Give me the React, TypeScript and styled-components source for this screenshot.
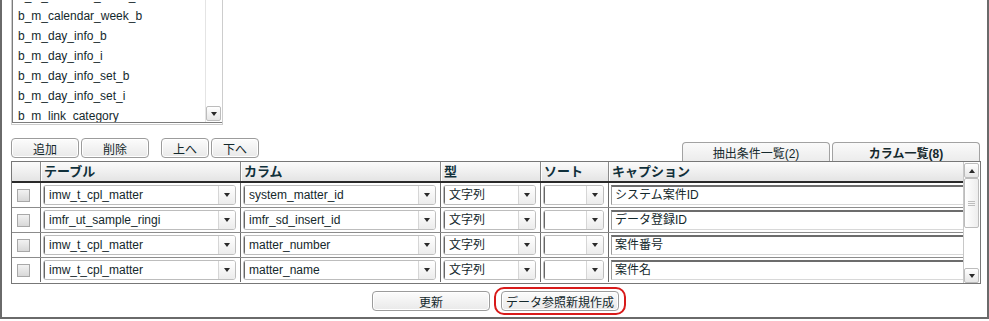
import React from 'react';
import styled, { createGlobalStyle } from 'styled-components';

const GlobalStyle = createGlobalStyle`
  html, body { margin: 0; padding: 0; background: #fff; }
  body {
    font-family: "Liberation Sans", "Noto Sans CJK JP", sans-serif;
    font-size: 12px;
    color: #14282c;
  }
  * { box-sizing: border-box; }
`;

const listItems = [
  'b_m_calendar_week_a',
  'b_m_calendar_week_b',
  'b_m_day_info_b',
  'b_m_day_info_i',
  'b_m_day_info_set_b',
  'b_m_day_info_set_i',
  'b_m_link_category',
];

const rows = [
  { table: 'imw_t_cpl_matter', column: 'system_matter_id', type: '文字列', caption: 'システム案件ID' },
  { table: 'imfr_ut_sample_ringi', column: 'imfr_sd_insert_id', type: '文字列', caption: 'データ登録ID' },
  { table: 'imw_t_cpl_matter', column: 'matter_number', type: '文字列', caption: '案件番号' },
  { table: 'imw_t_cpl_matter', column: 'matter_name', type: '文字列', caption: '案件名' },
];

const COLS = '29px 200px 200px 100px 68px 1fr';

const App = () => {
  return (
    <>
      <GlobalStyle />
      <Frame>
        <ListBox>
          <ListInner>
            <ListItems>
              {listItems.map((item) => (
                <ListItem key={item}>{item}</ListItem>
              ))}
            </ListItems>
            <ListScroll>
              <ScrollBtn>
                <Arrow />
              </ScrollBtn>
            </ListScroll>
          </ListInner>
        </ListBox>

        <Toolbar>
          <ButtonGroup>
            <Button $w={68}>追加</Button>
            <Button $w={68}>削除</Button>
            <Spacer />
            <Button $w={48}>上へ</Button>
            <Button $w={48}>下へ</Button>
          </ButtonGroup>
          <Tabs>
            <Tab>抽出条件一覧(2)</Tab>
            <Tab $active>カラム一覧(8)</Tab>
          </Tabs>
        </Toolbar>

        <Table>
          <TableBody>
            <HeaderRow>
              <HeadCell />
              <HeadCell>テーブル</HeadCell>
              <HeadCell>カラム</HeadCell>
              <HeadCell>型</HeadCell>
              <HeadCell>ソート</HeadCell>
              <HeadCell $last>キャプション</HeadCell>
            </HeaderRow>
            {rows.map((r, i) => (
              <Row key={i}>
                <Cell>
                  <Checkbox />
                </Cell>
                <Cell>
                  <Select>
                    <SelectText>{r.table}</SelectText>
                    <SelectBtn>
                      <Arrow />
                    </SelectBtn>
                  </Select>
                </Cell>
                <Cell>
                  <Select>
                    <SelectText>{r.column}</SelectText>
                    <SelectBtn>
                      <Arrow />
                    </SelectBtn>
                  </Select>
                </Cell>
                <Cell>
                  <Select>
                    <SelectText>{r.type}</SelectText>
                    <SelectBtn>
                      <Arrow />
                    </SelectBtn>
                  </Select>
                </Cell>
                <Cell>
                  <Select>
                    <SelectText />
                    <SelectBtn>
                      <Arrow />
                    </SelectBtn>
                  </Select>
                </Cell>
                <Cell $last>
                  <TextInput>{r.caption}</TextInput>
                </Cell>
              </Row>
            ))}
          </TableBody>
          <VScroll>
            <ScrollBtn>
              <Arrow $up />
            </ScrollBtn>
            <Thumb>
              <Grip />
            </Thumb>
            <Track />
            <ScrollBtn>
              <Arrow />
            </ScrollBtn>
          </VScroll>
        </Table>

        <Footer>
          <Button $w={118}>更新</Button>
          <Highlight>
            <Button $w={118}>データ参照新規作成</Button>
          </Highlight>
        </Footer>
      </Frame>
    </>
  );
};

export default App;

const Frame = styled.div`
  width: 989px;
  height: 319px;
  border: 2px solid #6a6a6a;
  border-top: none;
  background: #fff;
  overflow: hidden;
  padding: 0 7px 0 9px;
  display: flex;
  flex-direction: column;
`;

const ListBox = styled.div`
  margin-top: -10px;
  width: 212px;
  height: 135px;
  flex-shrink: 0;
  border: 1px solid #cdcdcd;
  padding-bottom: 1px;
  background: #fff;
  display: flex;
`;

const ListInner = styled.div`
  flex: 1;
  display: flex;
  border-left: 1px solid #7c7c7c;
  border-bottom: 1px solid #7c7c7c;
  overflow: hidden;
`;

const ListItems = styled.div`
  flex: 1;
  overflow: hidden;
  margin-top: -5px;
`;

const ListItem = styled.div`
  height: 20px;
  line-height: 20px;
  padding-left: 5px;
  white-space: nowrap;
`;

const ListScroll = styled.div`
  width: 17px;
  border-left: 1px solid #e4e4e4;
  display: flex;
  flex-direction: column;
  justify-content: flex-end;
  padding: 0 1px 1px 0;
`;

const ScrollBtn = styled.div`
  width: 15px;
  height: 15px;
  flex-shrink: 0;
  border: 1px solid #bcbcbc;
  border-radius: 2px;
  background: linear-gradient(#ffffff, #e6e6e6);
  display: flex;
  align-items: center;
  justify-content: center;
`;

const Arrow = styled.span<{ $up?: boolean }>`
  width: 0;
  height: 0;
  border-left: 3px solid transparent;
  border-right: 3px solid transparent;
  ${(p) => (p.$up ? 'border-bottom: 4px solid #2a2a2a;' : 'border-top: 4px solid #2a2a2a;')}
`;

const Toolbar = styled.div`
  margin-top: 13px;
  height: 23px;
  flex-shrink: 0;
  display: flex;
  justify-content: space-between;
  align-items: flex-end;
`;

const ButtonGroup = styled.div`
  align-self: flex-start;
  display: flex;
  gap: 2px;
`;

const Spacer = styled.div`
  width: 8px;
`;

const Button = styled.div<{ $w: number }>`
  width: ${(p) => p.$w}px;
  height: 20px;
  border: 1px solid #9c9c9c;
  border-radius: 4px;
  box-shadow: inset 0 0 0 1px #ffffff;
  background: linear-gradient(#fcfcfc, #e9e9e9);
  display: flex;
  align-items: center;
  justify-content: center;
  font-size: 12px;
  color: #14282c;
  white-space: nowrap;
`;

const Tabs = styled.div`
  display: flex;
  gap: 2px;
`;

const Tab = styled.div<{ $active?: boolean }>`
  width: 148px;
  height: 19px;
  border: 1px solid #a2a2a2;
  border-bottom: none;
  border-radius: 4px 4px 0 0;
  background: linear-gradient(#fafafa, #ececec);
  display: flex;
  align-items: center;
  justify-content: center;
  font-weight: ${(p) => (p.$active ? 700 : 400)};
`;

const Table = styled.div`
  width: 970px;
  height: 123px;
  flex-shrink: 0;
  border: 1px solid #777;
  display: grid;
  grid-template-columns: 1fr 17px;
`;

const TableBody = styled.div`
  display: flex;
  flex-direction: column;
`;

const HeaderRow = styled.div`
  display: grid;
  grid-template-columns: ${COLS};
  height: 21px;
  border-bottom: 2px solid #2a2a2a;
  background: linear-gradient(#fbfbfb, #e4e4e4);
`;

const HeadCell = styled.div<{ $last?: boolean }>`
  border-right: ${(p) => (p.$last ? 'none' : '1px solid #8a8a8a')};
  box-shadow: ${(p) => (p.$last ? 'none' : '1px 0 0 #ffffff')};
  padding-left: 3px;
  font-weight: 700;
  font-size: 13px;
  line-height: 19px;
  color: #10303a;
`;

const Row = styled.div`
  display: grid;
  grid-template-columns: ${COLS};
  height: 25px;
  border-bottom: 1px solid #8c8c8c;

  &:last-child {
    border-bottom: none;
    height: 24px;
  }
`;

const Cell = styled.div<{ $last?: boolean }>`
  border-right: ${(p) => (p.$last ? 'none' : '1px solid #6a6a6a')};
  display: flex;
  align-items: center;
  padding: 0 ${(p) => (p.$last ? '0' : '4px')} 0 2px;
`;

const Checkbox = styled.div`
  width: 13px;
  height: 13px;
  margin-left: 3px;
  border: 1px solid #a8a8a8;
  background: linear-gradient(#f2f2f2, #d8d8d8);
`;

const Select = styled.div`
  flex: 1;
  height: 20px;
  display: flex;
  border: 1px solid #bdbdbd;
  border-radius: 3px;
  background: #fff;
  overflow: hidden;
`;

const SelectText = styled.div`
  flex: 1;
  border-left: 1px solid #666;
  padding-left: 4px;
  line-height: 18px;
  white-space: nowrap;
  overflow: hidden;
`;

const SelectBtn = styled.div`
  width: 17px;
  border-left: 1px solid #d6d6d6;
  background: linear-gradient(#ffffff, #ececec);
  display: flex;
  align-items: center;
  justify-content: center;
`;

const TextInput = styled.div`
  flex: 1;
  height: 20px;
  border-top: 2px solid #6c6c6c;
  border-left: 1px solid #9a9a9a;
  border-bottom: 1px solid #d8d8d8;
  padding-left: 3px;
  line-height: 17px;
  background: #fff;
`;

const VScroll = styled.div`
  border-left: 1px solid #c8c8c8;
  background: #fff;
  display: flex;
  flex-direction: column;
  padding: 1px 1px 0 0;
`;

const Thumb = styled.div`
  width: 15px;
  height: 50px;
  border: 1px solid #bcbcbc;
  border-radius: 2px;
  background: linear-gradient(90deg, #ffffff, #ededed);
  display: flex;
  align-items: center;
  justify-content: center;
`;

const Grip = styled.div`
  width: 7px;
  height: 5px;
  border-top: 1px solid #bdbdbd;
  border-bottom: 1px solid #bdbdbd;
  background: linear-gradient(transparent 1px, #bdbdbd 1px, #bdbdbd 2px, transparent 2px);
`;

const Track = styled.div`
  flex: 1;
`;

const Footer = styled.div`
  margin-top: 3px;
  padding-left: 7px;
  display: flex;
  justify-content: center;
  align-items: center;
  gap: 4px;
`;

const Highlight = styled.div`
  border: 2px solid #d81a1a;
  border-radius: 10px;
  padding: 2px 5px;
`;
